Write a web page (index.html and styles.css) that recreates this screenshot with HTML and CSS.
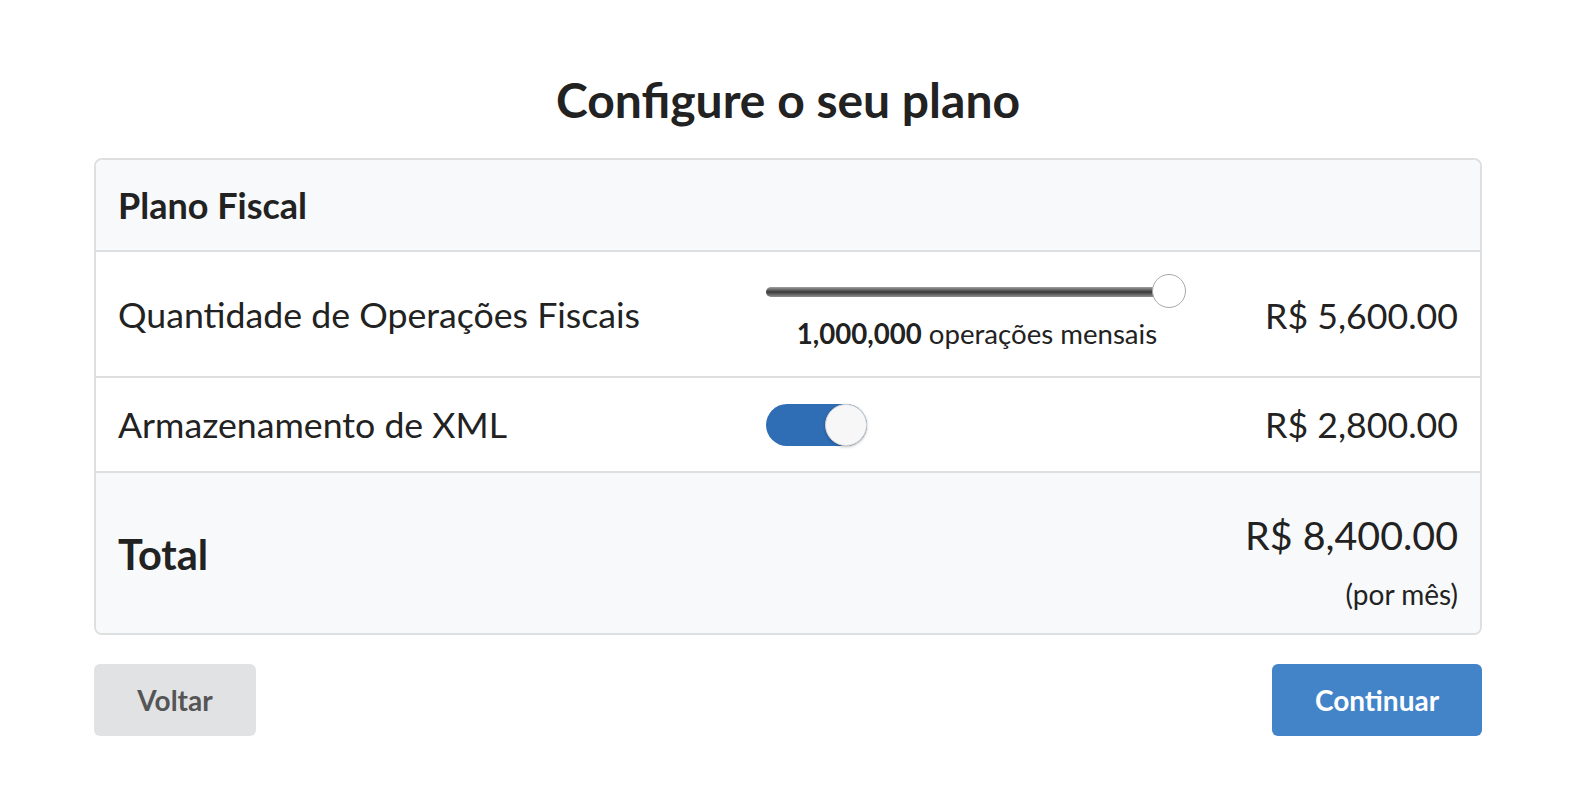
FILE: index.html
```html
<!DOCTYPE html>
<html lang="pt">
<head>
<meta charset="utf-8">
<link rel="stylesheet" href="styles.css">
</head>
<body>
<div class="page">
  <h1 class="title">Configure o seu plano</h1>
  <div class="card">
    <div class="card-header">Plano Fiscal</div>
    <div class="row row-ops">
      <div class="label">Quantidade de Operações Fiscais</div>
      <div class="control">
        <div class="slider">
          <div class="track"></div>
          <div class="thumb"></div>
        </div>
        <div class="slider-caption"><b>1,000,000</b> operações mensais</div>
      </div>
      <div class="price">R$ 5,600.00</div>
    </div>
    <div class="row row-xml">
      <div class="label">Armazenamento de XML</div>
      <div class="control">
        <div class="toggle"><div class="knob"></div></div>
      </div>
      <div class="price">R$ 2,800.00</div>
    </div>
    <div class="total">
      <div class="total-label">Total</div>
      <div class="total-value">
        <div class="total-price">R$ 8,400.00</div>
        <div class="per-month">(por mês)</div>
      </div>
    </div>
  </div>
  <div class="actions">
    <button class="btn btn-back">Voltar</button>
    <button class="btn btn-next">Continuar</button>
  </div>
</div>
</body>
</html>
```

FILE: styles.css
```css
html, body {
  margin: 0;
  padding: 0;
  background: #ffffff;
}
body {
  font-family: Lato, "Open Sans", sans-serif;
  color: #222222;
}
.page {
  width: 1388px;
  margin-left: 94px;
  padding-top: 72px;
}
.title {
  margin: 0 0 30px;
  text-align: center;
  font-size: 48px;
  font-weight: 700;
  line-height: 56px;
  color: #222222;
}
.card {
  border: 2px solid #dedfe1;
  border-radius: 8px;
  overflow: hidden;
}
.card-header {
  height: 92px;
  box-sizing: border-box;
  padding: 0 22px;
  display: flex;
  align-items: center;
  background: #f8f9fa;
  border-bottom: 2px solid #dedfe1;
  font-size: 36px;
  font-weight: 700;
  color: #222222;
}
.row {
  display: flex;
  align-items: center;
  padding: 0 22px;
  border-bottom: 2px solid #dedfe1;
  box-sizing: border-box;
}
.row-ops { height: 126px; }
.row-xml { height: 95px; }
.label {
  width: 648px;
  font-size: 35.7px;
  color: #222222;
}
.control {
  width: 422px;
  display: flex;
  flex-direction: column;
  align-items: flex-start;
}
.price {
  flex: 1;
  text-align: right;
  font-size: 35.7px;
  color: #222222;
}
.row-ops .price { padding-top: 2px; }
.slider {
  position: relative;
  width: 422px;
  height: 36px;
  display: flex;
  align-items: center;
  margin-top: -4px;
}
.track {
  width: 411px;
  height: 10px;
  border-radius: 5px;
  background: linear-gradient(to bottom, #a0a0a0 0%, #3a3a3a 50%, #909090 100%);
}
.thumb {
  position: absolute;
  left: 386px;
  top: 0;
  width: 34px;
  height: 34px;
  box-sizing: border-box;
  border-radius: 50%;
  background: #ffffff;
  border: 1px solid #a8a8a8;
}
.slider-caption {
  width: 422px;
  text-align: center;
  font-size: 27.6px;
  margin-top: 7px;
  color: #222222;
}
.slider-caption b { font-weight: 700; }
.toggle {
  position: relative;
  width: 101px;
  height: 42px;
  border-radius: 21px;
  background: #2f6db5;
}
.knob {
  position: absolute;
  right: 0;
  top: 0;
  width: 42px;
  height: 42px;
  box-sizing: border-box;
  border-radius: 50%;
  background: #f7f7f7;
  border: 1px solid #d4d4d4;
  box-shadow: 0 1px 3px rgba(0,0,0,0.25);
}
.total {
  height: 160px;
  display: flex;
  align-items: center;
  justify-content: space-between;
  padding: 0 22px;
  background: #f8f9fa;
}
.total-label {
  font-size: 41.5px;
  font-weight: 700;
  color: #222222;
  padding-top: 2px;
}
.total-value {
  display: flex;
  flex-direction: column;
  align-items: flex-end;
  margin-top: 14px;
}
.total-price {
  font-size: 39.4px;
  line-height: 48px;
}
.per-month {
  font-size: 28px;
  line-height: 32px;
  margin-top: 19px;
}
.actions {
  display: flex;
  justify-content: space-between;
  margin-top: 29px;
}
.btn {
  height: 72px;
  border: none;
  border-radius: 6px;
  font-family: Lato, "Open Sans", sans-serif;
  font-size: 28px;
  font-weight: 700;
  cursor: pointer;
}
.btn-back {
  width: 162px;
  background: #e1e2e4;
  color: #555555;
}
.btn-next {
  width: 210px;
  background: #4384c9;
  color: #ffffff;
}
```
